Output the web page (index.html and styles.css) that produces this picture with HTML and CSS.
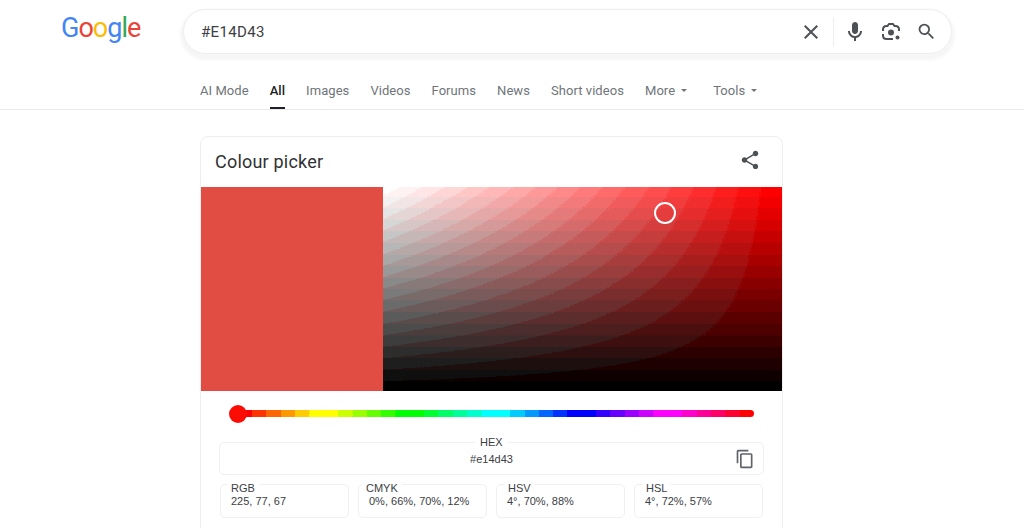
FILE: index.html
```html
<!DOCTYPE html>
<html lang="en">
<head>
<meta charset="utf-8">
<title>#E14D43 - Google Search</title>
<link rel="stylesheet" href="styles.css">
</head>
<body>
<svg class="defs" width="0" height="0" aria-hidden="true">
  <filter id="posterize" color-interpolation-filters="sRGB" x="0" y="0" width="100%" height="100%">
    <feComponentTransfer>
      <feFuncR type="discrete" tableValues="0 .06 .12 .18 .24 .3 .36 .42 .48 .54 .6 .66 .72 .78 .84 .9 .95 1"/>
      <feFuncG type="discrete" tableValues="0 .06 .12 .18 .24 .3 .36 .42 .48 .54 .6 .66 .72 .78 .84 .9 .95 1"/>
      <feFuncB type="discrete" tableValues="0 .06 .12 .18 .24 .3 .36 .42 .48 .54 .6 .66 .72 .78 .84 .9 .95 1"/>
    </feComponentTransfer>
    <feGaussianBlur stdDeviation="0.6"/>
  </filter>
  <filter id="bands" color-interpolation-filters="sRGB" x="0" y="0" width="100%" height="100%">
    <feComponentTransfer>
      <feFuncR type="discrete" tableValues="0 .2 .4 .6 .8 1"/>
      <feFuncG type="discrete" tableValues="0 .2 .4 .6 .8 1"/>
      <feFuncB type="discrete" tableValues="0 .2 .4 .6 .8 1"/>
    </feComponentTransfer>
  </filter>
</svg>
<header class="top">
  <div class="top-row">
    <div class="logo"><span class="b">G</span><span class="r">o</span><span class="y">o</span><span class="b">g</span><span class="g">l</span><span class="r">e</span></div>
    <div class="search">
      <span class="query">#E14D43</span>
      <svg class="ic ic-close" viewBox="0 0 24 24"><path d="M19 6.41 17.59 5 12 10.59 6.41 5 5 6.41 10.59 12 5 17.59 6.41 19 12 13.41 17.59 19 19 17.59 13.41 12z"/></svg>
      <span class="divider"></span>
      <svg class="ic ic-mic" viewBox="0 0 24 24"><path d="M12 14c1.66 0 3-1.34 3-3V5c0-1.66-1.34-3-3-3S9 3.34 9 5v6c0 1.66 1.34 3 3 3z"/><path d="M17 11c0 2.76-2.24 5-5 5s-5-2.24-5-5H5c0 3.53 2.61 6.43 6 6.92V21h2v-3.08c3.39-.49 6-3.39 6-6.92h-2z"/></svg>
      <svg class="ic ic-lens" viewBox="0 0 24 24"><path class="lens-line" d="M4 11V9.5C4 7.5 5.5 6 7.5 6H8.5L10 4H14L15.5 6H16.5C18.5 6 20 7.5 20 9.5V11M4 14V15.5C4 17.5 5.5 19 7.5 19H14"/><circle cx="12" cy="12.5" r="3"/><circle cx="18.5" cy="17.5" r="2"/></svg>
      <svg class="ic ic-search" viewBox="0 0 24 24"><path d="M15.5 14h-.79l-.28-.27A6.47 6.47 0 0 0 16 9.5 6.5 6.5 0 1 0 9.5 16c1.61 0 3.09-.59 4.23-1.57l.27.28v.79l5 4.99L20.49 19l-4.99-5zm-6 0C7.01 14 5 11.99 5 9.5S7.01 5 9.5 5 14 7.01 14 9.5 11.99 14 9.5 14z"/></svg>
    </div>
  </div>
  <nav class="tabs">
    <a>AI Mode</a>
    <a class="active">All</a>
    <a>Images</a>
    <a>Videos</a>
    <a>Forums</a>
    <a>News</a>
    <a>Short videos</a>
    <a class="menu">More<i class="caret"></i></a>
    <a class="menu tools">Tools<i class="caret"></i></a>
  </nav>
</header>
<main class="card">
  <div class="card-head">
    <h2>Colour picker</h2>
    <svg class="ic-share" viewBox="0 0 24 24"><path d="M18 16.08c-.76 0-1.44.3-1.96.77L8.91 12.7c.05-.23.09-.46.09-.7s-.04-.47-.09-.7l7.05-4.11c.54.5 1.25.81 2.04.81 1.66 0 3-1.34 3-3s-1.34-3-3-3-3 1.34-3 3c0 .24.04.47.09.7L8.04 9.81C7.5 9.31 6.79 9 6 9c-1.66 0-3 1.34-3 3s1.34 3 3 3c.79 0 1.5-.31 2.04-.81l7.12 4.16c-.05.21-.08.43-.08.65 0 1.61 1.31 2.92 2.92 2.92 1.61 0 2.92-1.31 2.92-2.92s-1.31-2.92-2.92-2.92z"/></svg>
  </div>
  <div class="picker">
    <div class="swatch"></div>
    <div class="field"><div class="field-fill"></div><span class="handle"></span></div>
  </div>
  <div class="slider"><div class="track"></div><span class="thumb"></span></div>
  <div class="box hex">
    <span class="label hex-label">HEX</span>
    <span class="value">#e14d43</span>
    <svg class="ic-copy" viewBox="0 0 24 24"><path d="M16 1H4c-1.1 0-2 .9-2 2v14h2V3h12V1zm3 4H8c-1.1 0-2 .9-2 2v14c0 1.1.9 2 2 2h11c1.1 0 2-.9 2-2V7c0-1.1-.9-2-2-2zm0 16H8V7h11v14z"/></svg>
  </div>
  <div class="values">
    <div class="box small"><span class="label">RGB</span><span class="value">225, 77, 67</span></div>
    <div class="box small cmyk"><span class="label">CMYK</span><span class="value">0%, 66%, 70%, 12%</span></div>
    <div class="box small hsv"><span class="label">HSV</span><span class="value">4°, 70%, 88%</span></div>
    <div class="box small hsv"><span class="label">HSL</span><span class="value">4°, 72%, 57%</span></div>
  </div>
</main>
</body>
</html>
```
FILE: styles.css
```css
* { box-sizing: border-box; }
html, body { margin: 0; height: 528px; overflow: hidden; background: #fff; }
body { font-family: Roboto, "Liberation Sans", Arial, sans-serif; color: #202124; }
.defs { display: block; height: 0; }

.top { border-bottom: 1px solid #e8eaed; height: 110px; }
.top-row { display: flex; align-items: flex-start; padding: 9px 0 0 61px; height: 74px; }
.logo { width: 122px; margin-top: 1px; font-family: Roboto, sans-serif; font-size: 27px; line-height: 36px; letter-spacing: -1px; font-weight: 400; }
.logo .b { color: #4285f4; }
.logo .r { color: #ea4335; }
.logo .y { color: #fbbc05; }
.logo .g { color: #34a853; }

.search { width: 769px; height: 45px; border-radius: 23px; border: 1px solid #eceef0; background: #fff; box-shadow: 0 3px 3px 3px rgba(32,33,36,.04); display: flex; align-items: center; padding: 0 14px 0 17px; }
.query { flex: 1; font-size: 15px; letter-spacing: .35px; color: #3c4043; }
.ic { width: 24px; height: 24px; fill: #4d5156; flex: none; }
.ic-close { margin-right: 10px; }
.divider { width: 1px; height: 30px; background: #eceef0; margin-right: 9px; }
.ic-mic { margin-right: 12px; }
.ic-lens { margin-right: 13px; }
.lens-line { fill: none; stroke: #4d5156; stroke-width: 2; }
.ic-search { width: 21px; height: 21px; }

.tabs { display: flex; padding-left: 200px; height: 35px; font-size: 13px; letter-spacing: .06px; color: #70757a; gap: 21px; }
.tabs a { height: 35px; display: flex; align-items: center; padding-bottom: 3px; line-height: 13px; position: relative; }
.tabs .active { color: #202124; font-weight: 500; }
.tabs .active::after { content: ""; position: absolute; left: 0; right: 0; bottom: 0; height: 2px; background: #202124; }
.tabs .menu { gap: 6px; }
.tabs .tools { margin-left: 5px; }
.caret { width: 0; height: 0; border: 3px solid transparent; border-top: 3px solid #70757a; border-bottom: 0; margin-top: 1px; }

.card { width: 583px; height: 420px; margin: 26px 0 0 200px; border: 1px solid #eceef0; border-radius: 8px 8px 0 0; overflow: hidden; }
.card-head { height: 50px; display: flex; align-items: center; justify-content: space-between; padding: 0 21px 0 14px; }
.card-head h2 { margin: 0 0 1px; font-size: 18px; font-weight: 400; color: #303134; letter-spacing: .2px; }
.ic-share { width: 22px; height: 22px; fill: #4d5156; margin-top: -5px; }

.picker { display: flex; height: 204px; }
.swatch { width: 182px; background: #e14d43; }
.field { flex: 1; position: relative; overflow: hidden; }
.field-fill { width: calc(100% + 4px); height: calc(100% + 4px); margin: -2px; background: linear-gradient(to top, #000, rgba(0,0,0,0)), linear-gradient(to right, #fff, #f00); filter: url(#posterize); }
.handle { position: absolute; left: 271px; top: 15px; width: 22px; height: 22px; border: 2px solid #fff; border-radius: 50%; }

.slider { position: relative; height: 7px; margin: 19px 28px 0 37px; }
.track { height: 100%; border-radius: 4px; overflow: hidden; background: linear-gradient(to right, #f00 0%, #ff0 16.6%, #0f0 33.3%, #0ff 50%, #00f 66.6%, #f0f 83.3%, #f00 100%); filter: url(#bands); }
.thumb { position: absolute; left: -9px; top: -5px; width: 18px; height: 18px; border-radius: 50%; background: #fb0d06; }

.box { position: relative; border: 1px solid #eff0f1; border-radius: 5px; font-family: "Liberation Sans", Arial, sans-serif; font-size: 11px; color: #3c4043; }
.hex { height: 33px; margin: 25px 18px 0 18px; text-align: center; padding-top: 10px; line-height: 12px; }
.label { position: absolute; top: -3px; left: 6px; padding: 0 4px; line-height: 12px; background: #fff; }
.hex-label { top: -7px; left: 255px; padding: 0 5px; }
.value { display: block; }
.ic-copy { position: absolute; right: 8px; top: 6px; width: 20px; height: 20px; fill: #5f6368; }

.values { display: grid; grid-template-columns: repeat(4, 129px); gap: 9px; margin: 9px 0 0 19px; }
.small { height: 34px; padding: 10px 0 0 10px; line-height: 12px; }
.cmyk .label { left: 3px; }
.hsv .label { left: 7px; }
```
